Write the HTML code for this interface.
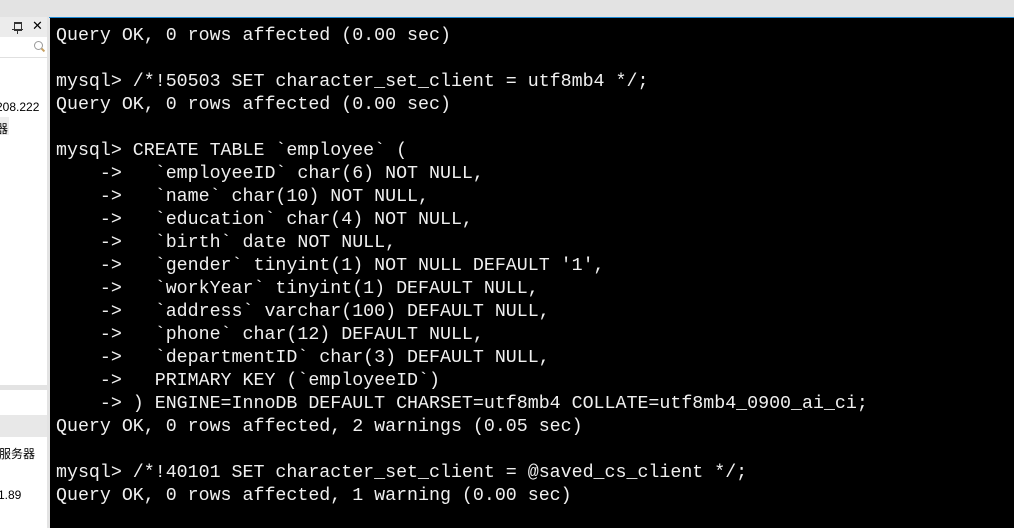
<!DOCTYPE html>
<html><head><meta charset="utf-8"><style>
body{margin:0;width:1014px;height:528px;overflow:hidden;background:#e3e3e3;position:relative;font-family:"Liberation Sans","Noto Sans CJK SC",sans-serif}
.top{position:absolute;left:0;top:0;width:1014px;height:17px;background:#e3e3e3}
.blue{position:absolute;left:49px;top:17px;width:965px;height:1px;background:#1e8ad6}
.term{position:absolute;left:50px;top:18px;width:964px;height:510px;background:#000}
pre{margin:0;position:absolute;left:56px;top:25px;color:#f0f0f0;font-family:"Liberation Mono","DejaVu Sans Mono",monospace;font-size:18.3px;line-height:23px}
.lp{position:absolute;left:0;top:17px;width:47px;height:511px;background:#fff}
.small{position:absolute;font-size:12px;color:#000;white-space:nowrap}
</style></head><body>
<div class="top"></div>
<div class="lp"></div>
<div style="position:absolute;left:0;top:17px;width:47px;height:20px;background:#ececec"></div>
<div style="position:absolute;left:14px;top:22px;width:6px;height:6px;border:1px solid #333;border-top:2px solid #333"></div>
<div style="position:absolute;left:12px;top:29px;width:11px;height:1px;background:#333"></div>
<div style="position:absolute;left:17px;top:30px;width:1px;height:4px;background:#333"></div>
<div class="small" style="left:32px;top:18px;font-size:13px">✕</div>
<div style="position:absolute;left:0;top:37px;width:47px;height:20px;background:#fff;border-bottom:1px solid #e0e0e0"></div>
<div style="position:absolute;left:34px;top:41px;width:7px;height:7px;border:1px solid #999;border-radius:50%"></div>
<div style="position:absolute;left:41px;top:49px;width:4px;height:2px;background:#c8a060;transform:rotate(45deg)"></div>
<div class="small" style="left:-4px;top:100px">208.222</div>
<div style="position:absolute;left:0;top:117px;width:9px;height:18px;background:#eee"></div>
<div class="small" style="left:-4px;top:120px">器</div>
<div style="position:absolute;left:0;top:385px;width:47px;height:5px;background:#e3e3e3"></div>
<div style="position:absolute;left:0;top:415px;width:47px;height:22px;background:#e8e8e8"></div>
<div class="small" style="left:-1px;top:445px">服务器</div>
<div class="small" style="left:-2px;top:488px">1.89</div>
<div style="position:absolute;left:47px;top:17px;width:3px;height:511px;background:#e3e3e3"></div>
<div class="blue"></div>
<div class="term"></div>
<pre>Query OK, 0 rows affected (0.00 sec)

mysql&gt; /*!50503 SET character_set_client = utf8mb4 */;
Query OK, 0 rows affected (0.00 sec)

mysql&gt; CREATE TABLE `employee` (
    -&gt;   `employeeID` char(6) NOT NULL,
    -&gt;   `name` char(10) NOT NULL,
    -&gt;   `education` char(4) NOT NULL,
    -&gt;   `birth` date NOT NULL,
    -&gt;   `gender` tinyint(1) NOT NULL DEFAULT '1',
    -&gt;   `workYear` tinyint(1) DEFAULT NULL,
    -&gt;   `address` varchar(100) DEFAULT NULL,
    -&gt;   `phone` char(12) DEFAULT NULL,
    -&gt;   `departmentID` char(3) DEFAULT NULL,
    -&gt;   PRIMARY KEY (`employeeID`)
    -&gt; ) ENGINE=InnoDB DEFAULT CHARSET=utf8mb4 COLLATE=utf8mb4_0900_ai_ci;
Query OK, 0 rows affected, 2 warnings (0.05 sec)

mysql&gt; /*!40101 SET character_set_client = @saved_cs_client */;
Query OK, 0 rows affected, 1 warning (0.00 sec)</pre>
</body></html>
